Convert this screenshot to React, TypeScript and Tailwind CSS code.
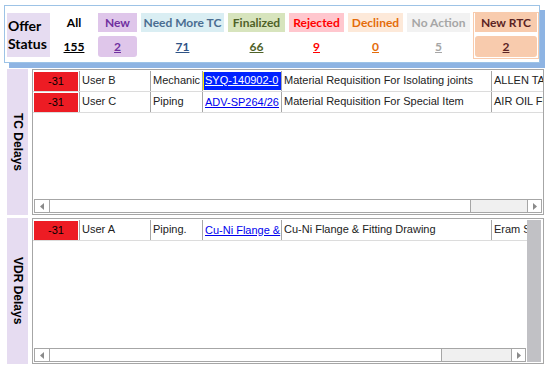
import React from 'react';

type Stat = {
  label: string;
  value: string;
  w: string;
  head: string;
  val: string;
};

const stats: Stat[] = [
  { label: 'All', value: '155', w: 'w-[40px]', head: 'text-black', val: 'text-black' },
  { label: 'New', value: '2', w: 'w-[39px]', head: 'bg-[#dfc6ea] text-[#7030a0]', val: 'bg-[#dfc6ea] text-[#7030a0] rounded-[3px]' },
  { label: 'Need More TC', value: '71', w: 'w-[83px]', head: 'bg-[#daeef3] text-[#4a6d91]', val: 'text-[#2f5385]' },
  { label: 'Finalized', value: '66', w: 'w-[57px]', head: 'bg-[#d7e4bd] text-[#4f6228]', val: 'text-[#4f6228]' },
  { label: 'Rejected', value: '9', w: 'w-[55px]', head: 'bg-[#ffc7ce] text-[#ff0000]', val: 'text-[#ff0000]' },
  { label: 'Declined', value: '0', w: 'w-[55px]', head: 'bg-[#fde9d9] text-[#e46c0a]', val: 'text-[#e46c0a]' },
  { label: 'No Action', value: '5', w: 'w-[63px]', head: 'bg-[#f2f2f2] text-[#a6a6a6]', val: 'text-[#a6a6a6]' },
];

type Row = {
  user: string;
  disc: string;
  doc: string;
  title: string;
  vendor: string;
  selected?: boolean;
};

const tcRows: Row[] = [
  { user: 'User B', disc: 'Mechanic', doc: 'SYQ-140902-0', title: 'Material Requisition For Isolating joints', vendor: 'ALLEN TA', selected: true },
  { user: 'User C', disc: 'Piping', doc: 'ADV-SP264/26', title: 'Material Requisition For Special Item', vendor: 'AIR OIL FL' },
];

const vdrRows: Row[] = [
  { user: 'User A', disc: 'Piping.', doc: 'Cu-Ni Flange &', title: 'Cu-Ni Flange & Fitting Drawing', vendor: 'Eram S' },
];

function LeftArrow() {
  return (
    <svg width="5" height="7" viewBox="0 0 5 7">
      <path d="M4 0 L0 3.5 L4 7 Z" fill="#8a8a8a" />
    </svg>
  );
}

function RightArrow() {
  return (
    <svg width="5" height="7" viewBox="0 0 5 7">
      <path d="M1 0 L5 3.5 L1 7 Z" fill="#8a8a8a" />
    </svg>
  );
}

function HScroll({ thumb }: { thumb: string }) {
  return (
    <div className="flex h-[14px] border border-[#a6a6a6] bg-[#f0f0f0] mx-[1px] mb-[1px]">
      <div className="w-[15px] bg-white border-r border-[#a6a6a6] flex items-center justify-center">
        <LeftArrow />
      </div>
      <div className={`${thumb} bg-white border-r border-[#a6a6a6]`} />
      <div className="flex-1" />
      <div className="w-[14px] bg-white border-l border-[#a6a6a6] flex items-center justify-center">
        <RightArrow />
      </div>
    </div>
  );
}

function DataRow({ r }: { r: Row }) {
  return (
    <div className="flex h-[21px] border-b border-[#dcdcdc] text-[11px] text-[#222] leading-[19px] whitespace-nowrap">
      <div className="w-[47px] shrink-0 p-[1px] pb-0 border-r border-[#a6a6a6]">
        <div className="h-full bg-[#ed1c24] text-black text-center">-31</div>
      </div>
      <div className="w-[71px] shrink-0 px-[2px] border-r border-[#a6a6a6] overflow-hidden">{r.user}</div>
      <div className="w-[52px] shrink-0 px-[2px] border-r border-[#a6a6a6] overflow-hidden">{r.disc}</div>
      <div className="w-[79px] shrink-0 border-r border-[#a6a6a6] overflow-hidden py-[1px]">
        {r.selected ? (
          <div className="h-full border-l border-[#ffee00] bg-[#0022ff] text-white underline pl-[1px] leading-[17px]">
            {r.doc}
          </div>
        ) : (
          <span className="pl-[2px] text-[#0000ee] underline leading-[17px]">{r.doc}</span>
        )}
      </div>
      <div className="w-[210px] shrink-0 px-[2px] border-r border-[#a6a6a6] overflow-hidden">{r.title}</div>
      <div className="flex-1 px-[2px] overflow-hidden">{r.vendor}</div>
    </div>
  );
}

function Section({ label, rows, vscroll }: { label: string; rows: Row[]; vscroll?: boolean }) {
  return (
    <div className="flex gap-[4px] h-[146px]">
      <div className="w-[21px] bg-[#e6dcf1] flex items-center justify-center">
        <span className="[writing-mode:vertical-rl] font-bold text-[12px] text-black">{label}</span>
      </div>
      <div className="w-[512px] border border-[#a6a6a6] flex">
        <div className="flex-1 min-w-0 flex flex-col pt-[1px]">
          <div className="flex-1 overflow-hidden">
            {rows.map((r, i) => (
              <DataRow key={i} r={r} />
            ))}
          </div>
          <HScroll thumb={vscroll ? 'w-[392px]' : 'w-[421px]'} />
        </div>
        {vscroll && <div className="w-[14px] bg-[#c1c1c5] mr-[2px] mt-[1px] mb-[1px]" />}
      </div>
    </div>
  );
}

export default function App() {
  return (
    <div className="w-[547px] h-[367px] bg-white overflow-hidden" style={{ fontFamily: '"Liberation Sans", Arial, sans-serif' }}>
      <div
        className="ml-[4px] mt-[5px] w-[536px] h-[58px] border border-[#9dc3e6] shadow-[5px_5px_0_#8eb4e3] pl-[2px] pt-[6px] flex gap-[4px]"
        style={{ fontFamily: 'Lato, "Open Sans", sans-serif' }}
      >
        <div className="w-[43px] h-[44px] mt-[1px] bg-[#e6dcf1] flex flex-col justify-center pl-[1px] font-bold text-[14px] leading-[18px] text-black">
          <span>Offer</span>
          <span>Status</span>
        </div>
        {stats.map((s) => (
          <div key={s.label} className={`${s.w} mt-[1px] flex flex-col gap-[4px] font-bold text-[12px]`}>
            <div className={`h-[19px] flex items-center justify-center whitespace-nowrap ${s.head}`}>{s.label}</div>
            <div className={`h-[21px] flex items-center justify-center underline ${s.val}`}>{s.value}</div>
          </div>
        ))}
        <div className="w-[66px] h-[47px] -ml-[1px] border border-[#f8cbad] px-[1px] flex flex-col gap-[4px] font-bold text-[12px] text-[#5b2323]">
          <div className="h-[19px] bg-[#f8cbad] flex items-center justify-center">New RTC</div>
          <div className="h-[21px] bg-[#f8cbad] rounded-[3px] flex items-center justify-center underline">2</div>
        </div>
      </div>
      <div className="mt-[6px] pl-[7px] flex flex-col gap-[3px]">
        <Section label="TC Delays" rows={tcRows} />
        <Section label="VDR Delays" rows={vdrRows} vscroll />
      </div>
    </div>
  );
}
